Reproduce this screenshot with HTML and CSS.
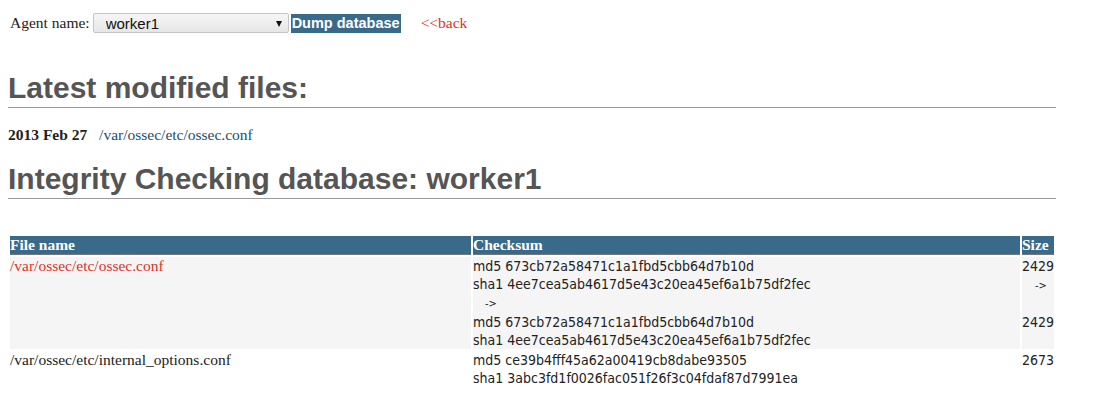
FILE: index.html
```html
<!DOCTYPE html>
<html lang="en">
<head>
  <meta charset="UTF-8" />
  <title>Integrity checking</title>
  <link rel="stylesheet" href="styles.css">
</head>
<body>
  <div class="page">
    <form class="agent-form">
      <label for="agent">Agent name:</label>
      <span class="select-wrap">
        <select id="agent" class="agent-select">
          <option>worker1</option>
        </select>
      </span>
      <button type="submit" class="dump-button">Dump database</button>
      <a href="#" class="back-link">&lt;&lt;back</a>
    </form>

    <h2>Latest modified files:</h2>
    <p class="latest">
      <strong>2013 Feb 27</strong>
      <a href="#">/var/ossec/etc/ossec.conf</a>
    </p>

    <h2>Integrity Checking database: worker1</h2>

    <table class="syscheck">
      <thead>
        <tr>
          <th class="col-name">File name</th>
          <th>Checksum</th>
          <th class="col-size">Size</th>
        </tr>
      </thead>
      <tbody>
        <tr class="odd">
          <td class="fname changed">/var/ossec/etc/ossec.conf</td>
          <td class="sum">
            md5 673cb72a58471c1a1fbd5cbb64d7b10d<br>
            sha1 4ee7cea5ab4617d5e43c20ea45ef6a1b75df2fec<br>
            <span class="arrow">-&gt;</span><br>
            md5 673cb72a58471c1a1fbd5cbb64d7b10d<br>
            sha1 4ee7cea5ab4617d5e43c20ea45ef6a1b75df2fec
          </td>
          <td class="size">
            2429<br>
            <span class="arrow">-&gt;</span><br>
            <br>
            2429
          </td>
        </tr>
        <tr>
          <td class="fname">/var/ossec/etc/internal_options.conf</td>
          <td class="sum">
            md5 ce39b4fff45a62a00419cb8dabe93505<br>
            sha1 3abc3fd1f0026fac051f26f3c04fdaf87d7991ea
          </td>
          <td class="size">2673</td>
        </tr>
      </tbody>
    </table>
  </div>
</body>
</html>
```

FILE: styles.css
```css
body {
  margin: 8px;
  font-family: "Liberation Serif", "Times New Roman", serif;
  font-size: 15.5px;
  color: #222;
  background: #fff;
}
.page {
  width: 1048px;
}

/* Agent selector */
.agent-form {
  display: flex;
  align-items: center;
  height: 20px;
  margin: 5px 0 0 2px;
}
.agent-form label {
  font-size: 15.5px;
  margin-right: 3px;
}
.select-wrap {
  position: relative;
  display: inline-block;
  height: 20px;
}
.select-wrap::after {
  content: '';
  position: absolute;
  right: 7px;
  top: 8px;
  border-left: 3.5px solid transparent;
  border-right: 3.5px solid transparent;
  border-top: 6px solid #111;
  pointer-events: none;
}
.agent-select {
  appearance: none;
  -webkit-appearance: none;
  width: 196px;
  height: 20px;
  padding: 0 20px 0 12px;
  font-family: "Liberation Sans", Arial, sans-serif;
  font-size: 15px;
  color: #111;
  border: 1px solid #c4c4c4;
  border-radius: 2px;
  background: linear-gradient(#f6f6f6, #e6e6e6);
}
.dump-button {
  margin-left: 2px;
  height: 19px;
  padding: 0 1px;
  border: none;
  background: #3a6a8a;
  color: #fff;
  font-family: "Liberation Sans", Arial, sans-serif;
  font-size: 14.5px;
  font-weight: bold;
}
.back-link {
  margin-left: 20px;
  color: #e0302a;
  text-decoration: none;
  font-size: 15.5px;
}

h2 {
  margin: 0;
  padding-bottom: 2px;
  font-family: "Liberation Sans", Arial, sans-serif;
  font-size: 30px;
  line-height: 34px;
  color: #555;
  border-bottom: 1px solid #999;
}
.agent-form + h2 {
  margin-top: 38px;
}

.latest {
  margin: 18px 0 18px;
}
.latest strong {
  margin-right: 8px;
}
.latest a {
  color: #1e4d6b;
  text-decoration: none;
}

/* Checksum table */
.syscheck {
  width: 100%;
  margin-top: 35px;
  border-spacing: 2px;
}
.syscheck th {
  background: #3a6a8a;
  color: #fff;
  text-align: left;
  font-size: 15.5px;
  padding: 0;
  height: 18px;
  line-height: 18px;
  border-bottom: 1px solid #777;
}
.syscheck .col-name {
  width: 461px;
}
.syscheck .col-size {
  width: 1%;
}
.syscheck td {
  vertical-align: top;
  padding: 0;
  line-height: 18px;
}
.syscheck tr.odd td {
  background: #f5f5f5;
}
.fname {
  color: #222;
}
.fname.changed {
  color: #e0302a;
}
.sum, .size {
  font-family: "DejaVu Sans Condensed", "DejaVu Sans", Verdana, sans-serif;
  font-stretch: condensed;
  font-size: 14px;
  color: #222;
}
.sum .arrow {
  margin-left: 12px;
  font-size: 11px;
}
.size {
  white-space: nowrap;
}
.size .arrow {
  margin-left: 13px;
  font-size: 11px;
}
```
